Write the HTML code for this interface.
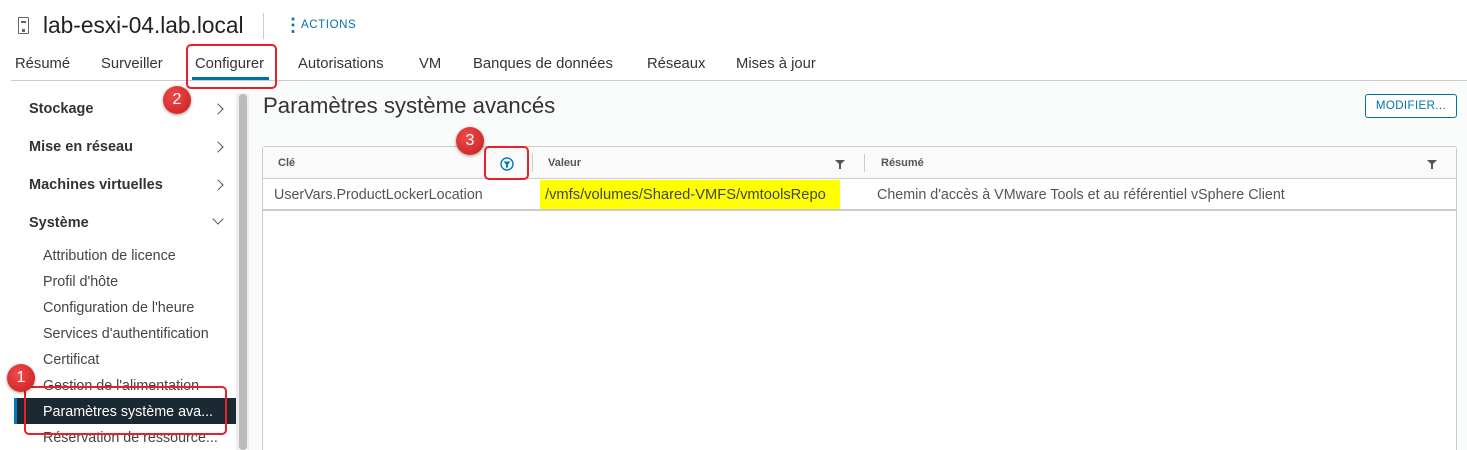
<!DOCTYPE html>
<html style="overflow:hidden;height:450px"><head><meta charset="utf-8"><style>
*{margin:0;padding:0;box-sizing:border-box}
body{width:1467px;height:450px;overflow:hidden;background:#fff;font-family:"Liberation Sans",sans-serif;color:#333;position:relative}
.a{position:absolute;white-space:nowrap}
.tab{position:absolute;top:56px;font-size:14.8px;color:#333}
.sb{font-size:14.5px;font-weight:bold;color:#333}
.si{font-size:14.3px;color:#444;left:43px}
.badge{position:absolute;width:28px;height:28px;border-radius:50%;background:radial-gradient(circle at 40% 35%,#f04a4a,#c71d1d);color:#fff;font-size:16px;text-align:center;line-height:28px;box-shadow:0 1px 3px rgba(0,0,0,.4)}
.red{position:absolute;border:2px solid #e8202a;border-radius:5px}
.chev{position:absolute;left:214px;width:8px;height:8px;border-right:1.5px solid #555;border-top:1.5px solid #555;transform:rotate(45deg)}
.td{font-size:14.3px}
</style></head><body>
<div class="a" style="left:18px;top:17px;width:11px;height:17px;border:1.5px solid #666;border-radius:1px"></div>
<div class="a" style="left:21px;top:21px;width:5px;height:1.5px;background:#666"></div>
<div class="a" style="left:22px;top:29px;width:3px;height:3px;background:#666"></div>
<div class="a" style="left:43px;top:12px;font-size:22.7px;color:#222">lab-esxi-04.lab.local</div>
<div class="a" style="left:263px;top:13px;width:1px;height:26px;background:#ccc"></div>
<div class="a" style="left:284px;top:18px;font-size:18px;color:#0072a3;font-weight:bold;line-height:14px">⋮</div>
<div class="a" style="left:301px;top:19px;font-size:11.5px;color:#0072a3;letter-spacing:.6px">ACTIONS</div>
<div class="tab" style="left:15px">Résumé</div>
<div class="tab" style="left:101px">Surveiller</div>
<div class="tab" style="left:195px">Configurer</div>
<div class="a" style="left:192px;top:77px;width:77px;height:3px;background:#0072a3"></div>
<div class="tab" style="left:298px">Autorisations</div>
<div class="tab" style="left:419px">VM</div>
<div class="tab" style="left:473px">Banques de données</div>
<div class="tab" style="left:647px">Réseaux</div>
<div class="tab" style="left:736px">Mises à jour</div>
<div class="a" style="left:11px;top:80px;width:1456px;height:1px;background:#ccc"></div>
<!-- sidebar -->
<div class="a sb" style="left:29px;top:101px">Stockage</div><div class="chev" style="top:105px"></div>
<div class="a sb" style="left:29px;top:139px">Mise en réseau</div><div class="chev" style="top:143px"></div>
<div class="a sb" style="left:29px;top:177px">Machines virtuelles</div><div class="chev" style="top:181px"></div>
<div class="a sb" style="left:29px;top:215px">Système</div><div class="chev" style="top:215px;transform:rotate(135deg)"></div>
<div class="a si" style="top:248px">Attribution de licence</div>
<div class="a si" style="top:274px">Profil d'hôte</div>
<div class="a si" style="top:300px">Configuration de l'heure</div>
<div class="a si" style="top:326px">Services d'authentification</div>
<div class="a si" style="top:352px">Certificat</div>
<div class="a si" style="top:378px">Gestion de l'alimentation</div>
<div class="a" style="left:14px;top:398px;width:222px;height:26px;background:#1b2a32"></div>
<div class="a" style="left:14px;top:398px;width:3px;height:26px;background:#0079b8"></div>
<div class="a si" style="top:404px;color:#fff">Paramètres système ava...</div>
<div class="a si" style="top:430px">Réservation de ressource...</div>
<div class="a" style="left:236px;top:93px;width:13px;height:357px;background:#eee"></div>
<div class="a" style="left:239px;top:94px;width:8px;height:356px;background:#bbb;border-radius:4px"></div>
<div class="a" style="left:249px;top:81px;width:1218px;height:369px;background:#fafbfb"></div>
<!-- content -->
<div class="a" style="left:263px;top:93px;font-size:22.2px;color:#333">Paramètres système avancés</div>
<div class="a" style="left:1365px;top:94px;width:92px;height:24px;border:1px solid #0072a3;border-radius:3px;font-size:11.5px;color:#0072a3;text-align:center;line-height:22px;letter-spacing:.4px;background:#fff">MODIFIER...</div>
<div class="a" style="left:262px;top:146px;width:1195px;height:310px;border:1px solid #ccc;border-radius:3px;background:#fff"></div>
<div class="a" style="left:263px;top:147px;width:1193px;height:32px;background:#fafafa;border-bottom:1px solid #ccc"></div>
<div class="a" style="left:278px;top:157px;font-size:11px;font-weight:bold;color:#555">Clé</div>
<div class="a" style="left:548px;top:157px;font-size:11px;font-weight:bold;color:#555">Valeur</div>
<div class="a" style="left:881px;top:157px;font-size:11px;font-weight:bold;color:#555">Résumé</div>
<div class="a" style="left:532px;top:154px;width:1px;height:18px;background:#ccc"></div>
<div class="a" style="left:864px;top:154px;width:1px;height:18px;background:#ccc"></div>
<svg class="a" style="left:835px;top:160px" width="10" height="9"><path d="M0 0H10L6 4V9H4V4Z" fill="#555"/></svg>
<svg class="a" style="left:1427px;top:160px" width="10" height="9"><path d="M0 0H10L6 4V9H4V4Z" fill="#555"/></svg>
<svg class="a" style="left:500px;top:157px" width="14" height="14"><circle cx="7" cy="7" r="6" fill="none" stroke="#0079b8" stroke-width="1.4"/><path d="M3.5 4.5H10.5L8 7.5V10.5H6V7.5Z" fill="#0079b8"/></svg>
<div class="a td" style="left:274px;top:187px;color:#555">UserVars.ProductLockerLocation</div>
<div class="a" style="left:540px;top:180px;width:300px;height:29px;background:#ffff00"></div>
<div class="a td" style="left:545px;top:187px;color:#444;font-size:14.7px">/vmfs/volumes/Shared-VMFS/vmtoolsRepo</div>
<div class="a td" style="left:877px;top:187px;color:#555">Chemin d'accès à VMware Tools et au référentiel vSphere Client</div>
<div class="a" style="left:263px;top:209px;width:1193px;height:2px;background:#ccc"></div>
<!-- annotations -->
<div class="red" style="left:186px;top:44px;width:91px;height:45px"></div>
<div class="badge" style="left:163px;top:86px">2</div>
<div class="red" style="left:484px;top:146px;width:45px;height:34px"></div>
<div class="badge" style="left:456px;top:127px">3</div>
<div class="red" style="left:24px;top:386px;width:203px;height:49px"></div>
<div class="badge" style="left:7px;top:364px">1</div>
</body></html>
